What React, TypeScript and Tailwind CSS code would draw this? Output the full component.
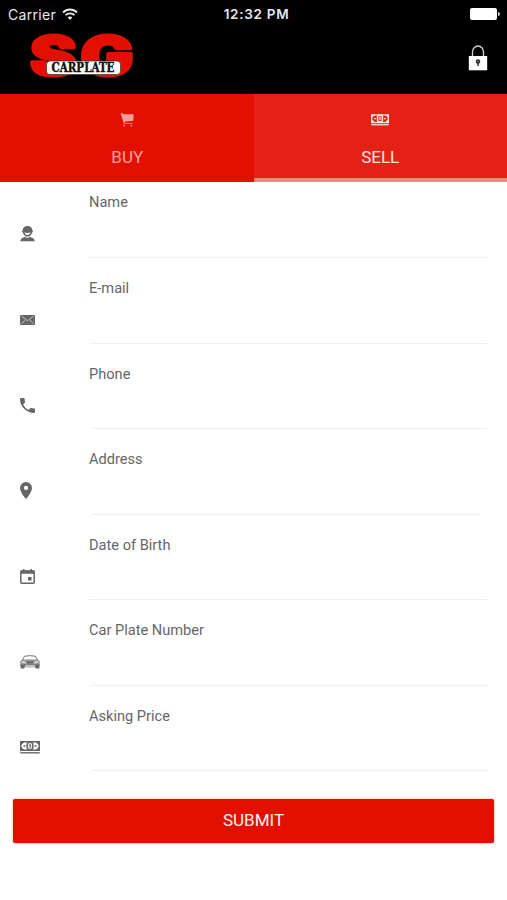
import React from "react";

type IconProps = { className?: string };

const Wifi = () => (
  <svg width="16" height="13" viewBox="0 0 16 13" fill="none" stroke="#e8e8e8" strokeWidth="1.8">
    <path d="M1 4.500C5 .5 11 .5 15 4.500" />
    <path d="M3.500 7.200c2.500-2.500 6.500-2.500 9 0" />
    <path d="M5.600 9.300c1.300-1.200 3.500-1.200 4.800 0L8 12z" fill="#e8e8e8" stroke="none" />
  </svg>
);

const Logo = () => (
  <svg width="106" height="46" viewBox="0 0 106 46" className="overflow-visible">
    <g fill="#e21000" stroke="#e21000" strokeWidth="3" strokeLinejoin="round" fontFamily="Inter, sans-serif" fontWeight="900" fontSize="53">
      <text transform="translate(1 41.500) scale(1.260 1)" textLength="37" lengthAdjust="spacingAndGlyphs">S</text>
      <text transform="translate(51.500 41.500) scale(1.260 1)" textLength="42" lengthAdjust="spacingAndGlyphs">G</text>
    </g>
    <rect x="17.500" y="28" width="74" height="13.500" rx="3.500" fill="#fff" stroke="#333" strokeWidth=".7" />
    <text x="22.500" y="39.200" fill="#111" stroke="#111" strokeWidth=".4" fontFamily="'DejaVu Serif', serif" fontWeight="700" fontSize="12.500" textLength="63" lengthAdjust="spacingAndGlyphs">CARPLATE</text>
  </svg>
);

const Lock = () => (
  <svg width="20" height="26" viewBox="0 0 20 26">
    <path d="M4.500 12V7a5.500 6 0 0 1 11 0v5" fill="none" stroke="#ccc" strokeWidth="1.400" />
    <path d="M.8 11h18.400v14.300H.8z" fill="#fff" />
    <circle cx="10" cy="16.500" r="2.200" fill="#222" />
    <path d="M9.300 17h1.400v4H9.300z" fill="#222" />
    <circle cx="10" cy="16.300" r=".6" fill="#fff" />
  </svg>
);

const Cart = () => (
  <svg width="14" height="14" viewBox="0 0 14 14" fill="currentColor">
    <path d="M.5.300h2.500l.3.900h10.300l-.3 6.600-8.800 1 .3 1.200h7.700v.8H4z" />
    <circle cx="4" cy="12.600" r=".9" />
    <circle cx="11.300" cy="12.600" r=".9" />
  </svg>
);

const Cash = ({ className }: IconProps) => (
  <svg className={className} viewBox="0 0 20 13" fill="none" stroke="currentColor">
    <path d="M.7.7h18.600v8.600H.7z" strokeWidth="1.400" />
    <path d="M1 1h3L1 4zM19 1h-3l3 3zM1 9h3L1 6zM19 9h-3l3-3z" fill="currentColor" strokeWidth=".5" />
    <rect x="7.300" y="1.500" width="5.400" height="7" rx="1.500" strokeWidth="1.700" />
    <path d="M9.300 3.800h.9v2.900M3.500 5h2M14.500 5h2" strokeWidth="1.300" />
    <path d="M.3 11.800h19.400" strokeWidth="1.400" />
  </svg>
);

const Person = () => (
  <svg width="15" height="16" viewBox="0 0 15 16" fill="currentColor">
    <path fillRule="evenodd" d="M7.500 0C4.500 0 2.700 2 2.500 4.700L1.900 6l1 .4C3.400 9 5.300 10.600 7.500 10.600S11.600 9 12.100 6.400l1-.4-.6-1.300C12.300 2 10.500 0 7.500 0zM4.500 6.600c2 .6 4 .6 6 0-.3 1.500-1.500 2.500-3 2.500s-2.700-1-3-2.500z" />
    <path d="M.3 15.200c0-2.600 1.700-3.200 4.500-4.300 1.700 1 3.700 1 5.400 0 2.800 1.100 4.500 1.700 4.500 4.300z" />
  </svg>
);

const Mail = () => (
  <svg width="15" height="10" viewBox="0 0 15 10">
    <rect width="15" height="10" rx="1" fill="currentColor" />
    <path d="M1.500 1.200l6 4.500 6-4.500M1.500 8.800L5 5.200M13.500 8.800L10 5.200" fill="none" stroke="#ddd" strokeWidth=".8" />
  </svg>
);

const Phone = () => (
  <svg width="15" height="15" viewBox="3 3 18 18" fill="currentColor">
    <path d="M6.620 10.790a15.150 15.150 0 0 0 6.590 6.590l2.200-2.200c.27-.27.67-.36 1.020-.24 1.120.37 2.330.57 3.570.57.550 0 1 .45 1 1V20c0 .55-.45 1-1 1A17 17 0 0 1 3 4c0-.55.45-1 1-1h3.500c.55 0 1 .45 1 1 0 1.250.2 2.450.57 3.570.11.350.03.740-.25 1.020z" />
  </svg>
);

const Pin = () => (
  <svg width="12" height="17" viewBox="5 2 14 20" preserveAspectRatio="none" fill="currentColor">
    <path fillRule="evenodd" d="M12 2a7 7 0 0 0-7 7c0 5.250 7 13 7 13s7-7.750 7-13a7 7 0 0 0-7-7zm0 9.500a2.500 2.500 0 1 1 0-5 2.500 2.500 0 0 1 0 5z" />
  </svg>
);

const Calendar = () => (
  <svg width="15" height="15" viewBox="0 0 15 15">
    <path d="M3 0h1.500v3H3zM10.500 0H12v3h-1.500z" fill="currentColor" />
    <rect x=".8" y="2" width="13.400" height="12.200" rx="1" fill="none" stroke="currentColor" strokeWidth="1.500" />
    <path d="M.5 1.500h14v3.300H.5zM8 8h3.500v3.500H8z" fill="currentColor" />
  </svg>
);

const Car = () => (
  <svg width="20" height="14" viewBox="0 0 20 14">
    <path d="M2.500 5L4.500 1.200q5.500-1 11 0l2 3.800" fill="none" stroke="currentColor" strokeWidth=".9" />
    <path d="M2 4.500Q10 4 18 4.500l1.800 1.700v4.300H.2V6.200z" fill="currentColor" opacity=".65" />
    <path d="M6 6.200h8l-1.300 2.300H7.300z" fill="currentColor" />
    <path d="M1.200 6.200l4 .6.800 1.400-3.800-.4zM18.800 6.200l-4 .6-.8 1.400 3.800-.4z" fill="#fff" opacity=".8" />
    <path d="M.3 9.500h19.400l-.5 4h-3.400l-.5-1.300H4.700l-.5 1.300H.8z" fill="currentColor" />
    <path d="M5.500 10.300h9l1 1.400h-11z" fill="#fff" opacity=".8" />
  </svg>
);

const fields = [
  { label: "Name", icon: <Person />, line: "ml-[89px] mr-5" },
  { label: "E-mail", icon: <Mail />, line: "ml-[90px] mr-5" },
  { label: "Phone", icon: <Phone />, line: "ml-[92px] mr-5" },
  { label: "Address", icon: <Pin />, line: "ml-[92px] mr-[26px]" },
  { label: "Date of Birth", icon: <Calendar />, line: "ml-[89px] mr-5" },
  { label: "Car Plate Number", icon: <Car />, line: "ml-[90px] mr-[19px]" },
  { label: "Asking Price", icon: <Cash className="h-[13px] w-5" />, line: "ml-[92px] mr-[19px]" },
];

export default function App() {
  return (
    <div className="flex h-[900px] w-[507px] flex-col overflow-hidden bg-white font-[Roboto,sans-serif]">
      <header className="h-[94px] shrink-0 bg-black">
        <div className="grid h-[27px] grid-cols-3 items-center pl-2 pr-[7px] font-[Inter,sans-serif] text-[14px] leading-[27px] text-[#e8e8e8]">
          <div className="flex items-center gap-[6px]">
            <span className="tracking-[0.3px]">Carrier</span>
            <Wifi />
          </div>
          <span className="pl-[5px] pt-px text-center text-[13.500px] font-semibold tracking-[0.700px]">12:32 PM</span>
          <div className="flex items-center justify-end gap-px">
            <div className="h-3 w-[27px] rounded-[2px] bg-white" />
            <div className="h-1 w-[2px] rounded-r bg-[#ccc]" />
          </div>
        </div>
        <div className="flex items-start justify-between pl-[29px] pr-[19px] pt-[6px]">
          <Logo />
          <div className="pt-3"><Lock /></div>
        </div>
      </header>

      <nav className="grid h-[88px] shrink-0 grid-cols-2 text-[17px] leading-5">
        <button className="flex flex-col items-center bg-[#e21000] pl-px pt-[19px] text-[#f5a19b]">
          <Cart />
          <span className="mt-5">BUY</span>
        </button>
        <button className="flex flex-col items-center border-b-4 border-[#f2857f] bg-[#e52015] pt-5 text-[#fde3e1]">
          <Cash className="h-3 w-[18px]" />
          <span className="mt-[21px]">SELL</span>
        </button>
      </nav>

      <form className="flex h-[599px] shrink-0 flex-col text-[#666]">
        {fields.map((f) => (
          <label key={f.label} className="flex flex-1 flex-col">
            <span className="ml-[89px] mt-[10.400px] h-5 text-[14.600px] leading-5">{f.label}</span>
            <span className="ml-5 mt-[11.600px] flex h-5 items-center">{f.icon}</span>
            <span className={`mt-[13px] h-px bg-[#f0f0f0] ${f.line}`} />
          </label>
        ))}
      </form>

      <button className="mx-[13px] mt-[17.500px] flex h-11 shrink-0 items-start justify-center rounded-[2px] bg-[#e21000] pt-[11px] text-[17px] leading-5 text-[#fff0ef] shadow-[0_0_2px_rgba(226,16,0,0.6)]">
        SUBMIT
      </button>
    </div>
  );
}
